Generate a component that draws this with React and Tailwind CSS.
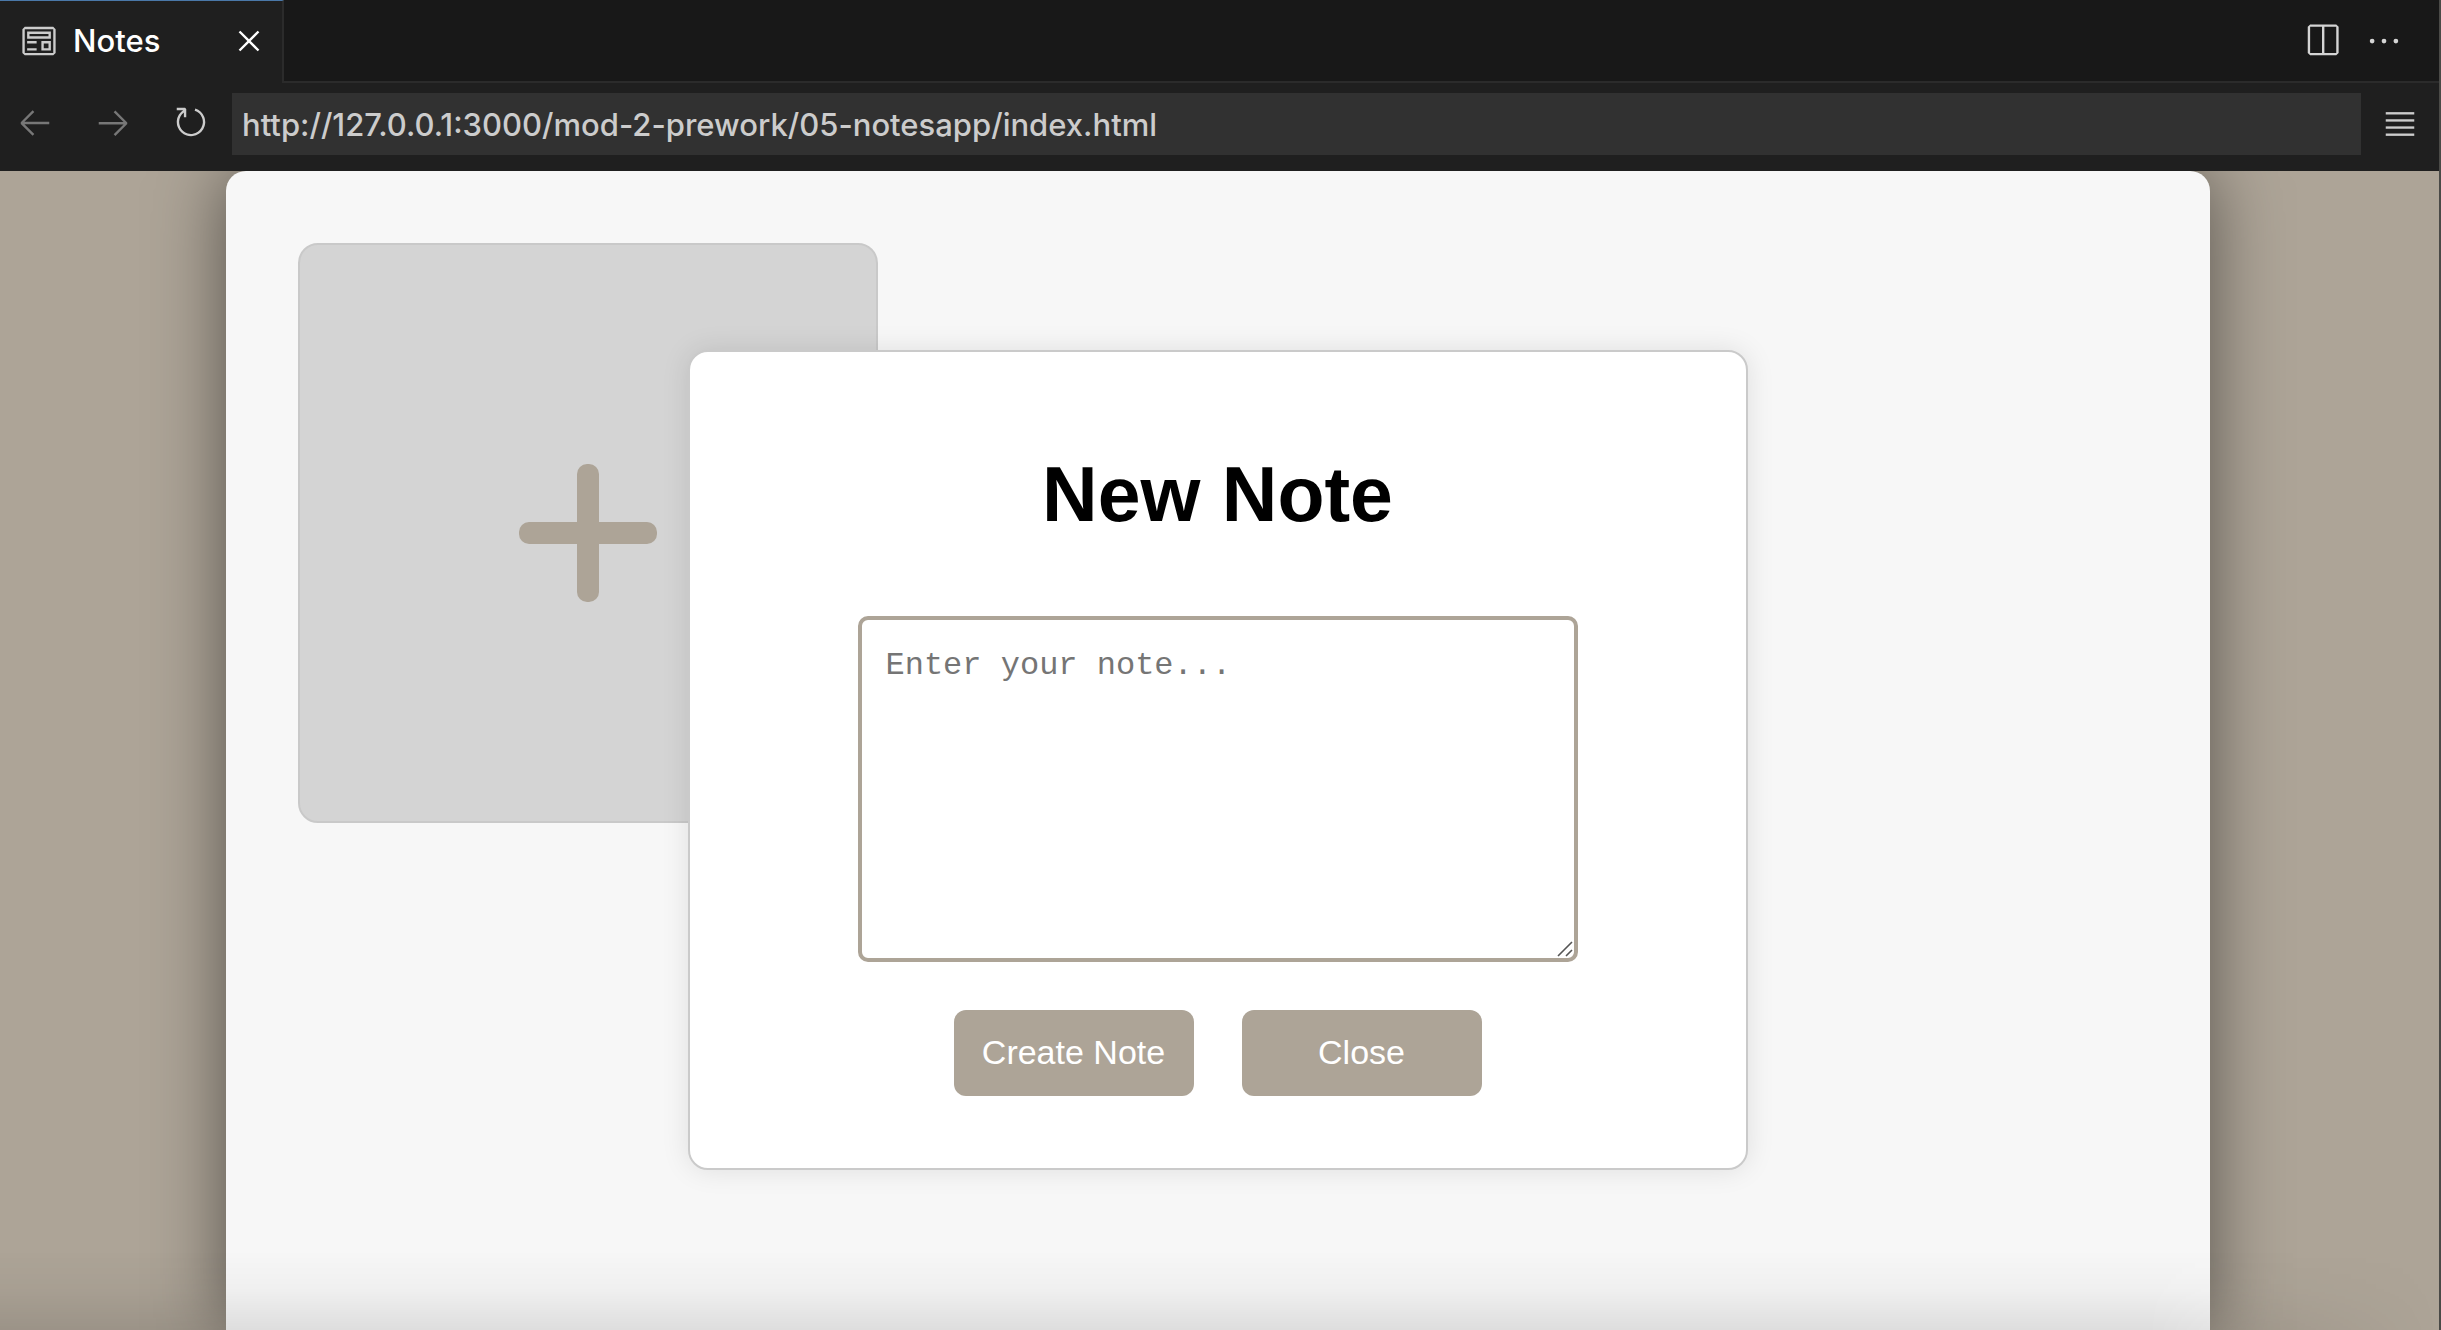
import {
  VscPreview,
  VscClose,
  VscArrowLeft,
  VscArrowRight,
  VscRefresh,
  VscSplitHorizontal,
  VscEllipsis,
} from "react-icons/vsc";

function MenuIcon() {
  return (
    <svg viewBox="0 0 16 16" className="size-[38px]" fill="currentColor" aria-hidden="true">
      <rect x="2" y="3" width="12" height="1" />
      <rect x="2" y="6" width="12" height="1" />
      <rect x="2" y="9" width="12" height="1" />
      <rect x="2" y="12" width="12" height="1" />
    </svg>
  );
}

function TabBar() {
  return (
    <div className="flex h-[83px] items-stretch bg-[#181818]">
      <div className="flex w-[284px] items-center border-t border-r-2 border-t-[#4a78a8] border-r-[#2b2b2b] bg-[#1f1f1f] pr-[14px] pb-0.5 pl-5 text-white">
        <VscPreview className="size-[38px] text-[#cccccc]" aria-hidden="true" />
        <span className="ml-[15px] grow text-[31px] leading-10 font-medium">Notes</span>
        <button type="button" aria-label="Close tab">
          <VscClose className="size-[38px]" />
        </button>
      </div>
      <div className="flex grow items-center justify-end gap-6 border-b-2 border-[#2b2b2b] pr-9 text-[#d4d4d4]">
        <button type="button" aria-label="Split editor">
          <VscSplitHorizontal className="size-[38px]" />
        </button>
        <button type="button" aria-label="More actions">
          <VscEllipsis className="size-[38px]" />
        </button>
      </div>
    </div>
  );
}

function AddressBar() {
  return (
    <div className="flex h-[88px] items-center bg-[#1f1f1f] pr-5 pb-1.5 pl-4 text-[#cccccc]">
      <div className="flex shrink-0 items-center gap-10 pb-1">
        <button type="button" aria-label="Back" className="text-[#777777]">
          <VscArrowLeft className="size-[38px]" />
        </button>
        <button type="button" aria-label="Forward" className="text-[#777777]">
          <VscArrowRight className="size-[38px]" />
        </button>
        <button type="button" aria-label="Reload">
          <VscRefresh className="size-[38px]" />
        </button>
      </div>
      <input
        type="text"
        aria-label="Address"
        defaultValue="http://127.0.0.1:3000/mod-2-prework/05-notesapp/index.html"
        className="ml-[22px] h-[62px] min-w-0 grow bg-[#313131] px-[10px] text-[31px] font-medium outline-none"
      />
      <button type="button" aria-label="Menu" className="ml-5">
        <MenuIcon />
      </button>
    </div>
  );
}

function NewNoteDialog() {
  return (
    <div
      role="dialog"
      aria-labelledby="dialog-title"
      className="absolute top-[179px] left-1/2 flex w-[1060px] max-w-full -translate-x-1/2 flex-col items-center rounded-[20px] border-2 border-[#cacaca] bg-white p-[72px] font-['Liberation_Sans',Arial,sans-serif] shadow-[0_0_28px_rgba(0,0,0,0.1)]"
    >
      <h1 id="dialog-title" className="mt-[26px] text-[77px] leading-[88px] font-bold text-black">
        New Note
      </h1>
      <div className="relative mt-[78px] w-[720px] max-w-full">
        <textarea
          aria-label="Note"
          placeholder="Enter your note..."
          className="block h-[346px] w-full resize-none rounded-[10px] border-4 border-[#ada497] px-6 py-7 font-['Liberation_Mono','Courier_New',monospace] text-[32px] leading-9 text-black outline-none placeholder:text-[#757575]"
        />
        <svg
          viewBox="0 0 18 18"
          className="pointer-events-none absolute right-1 bottom-1 size-[18px]"
          stroke="#555555"
          strokeWidth="1.6"
          aria-hidden="true"
        >
          <path d="M2 16 16 2M10 16l6-6" />
        </svg>
      </div>
      <div className="mt-12 flex gap-12">
        <button type="button" className="h-[86px] w-[240px] rounded-xl bg-[#ada497] pb-0.5 text-[34px] text-white">
          Create Note
        </button>
        <button type="button" className="h-[86px] w-[240px] rounded-xl bg-[#ada497] pb-0.5 text-[34px] text-white">
          Close
        </button>
      </div>
    </div>
  );
}

export default function App() {
  return (
    <div className="flex h-screen flex-col overflow-hidden border-r-2 border-[#4a4a47] font-[Inter,sans-serif]">
      <TabBar />
      <AddressBar />
      <main className="relative flex min-h-0 grow justify-center overflow-hidden bg-[#ada497] pr-1">
        <div className="relative w-full max-w-[1984px] rounded-t-[20px] bg-[#f7f7f7] p-[72px] shadow-[0_0_72px_rgba(0,0,0,0.5)]">
          <button
            type="button"
            aria-label="Add note"
            className="flex size-[580px] items-center justify-center rounded-[20px] border-2 border-[#c9c9c9] bg-[#d4d4d4]"
          >
            <svg viewBox="0 0 138 138" className="size-[138px]" fill="#ada497" aria-hidden="true">
              <rect x="0" y="58" width="138" height="22" rx="10" />
              <rect x="58" y="0" width="22" height="138" rx="10" />
            </svg>
          </button>
          <NewNoteDialog />
        </div>
        <div className="pointer-events-none absolute inset-x-0 bottom-0 h-20 bg-linear-to-t from-black/10 via-black/3 to-transparent [mask-image:linear-gradient(to_right,black_88%,transparent)]" />
      </main>
    </div>
  );
}
